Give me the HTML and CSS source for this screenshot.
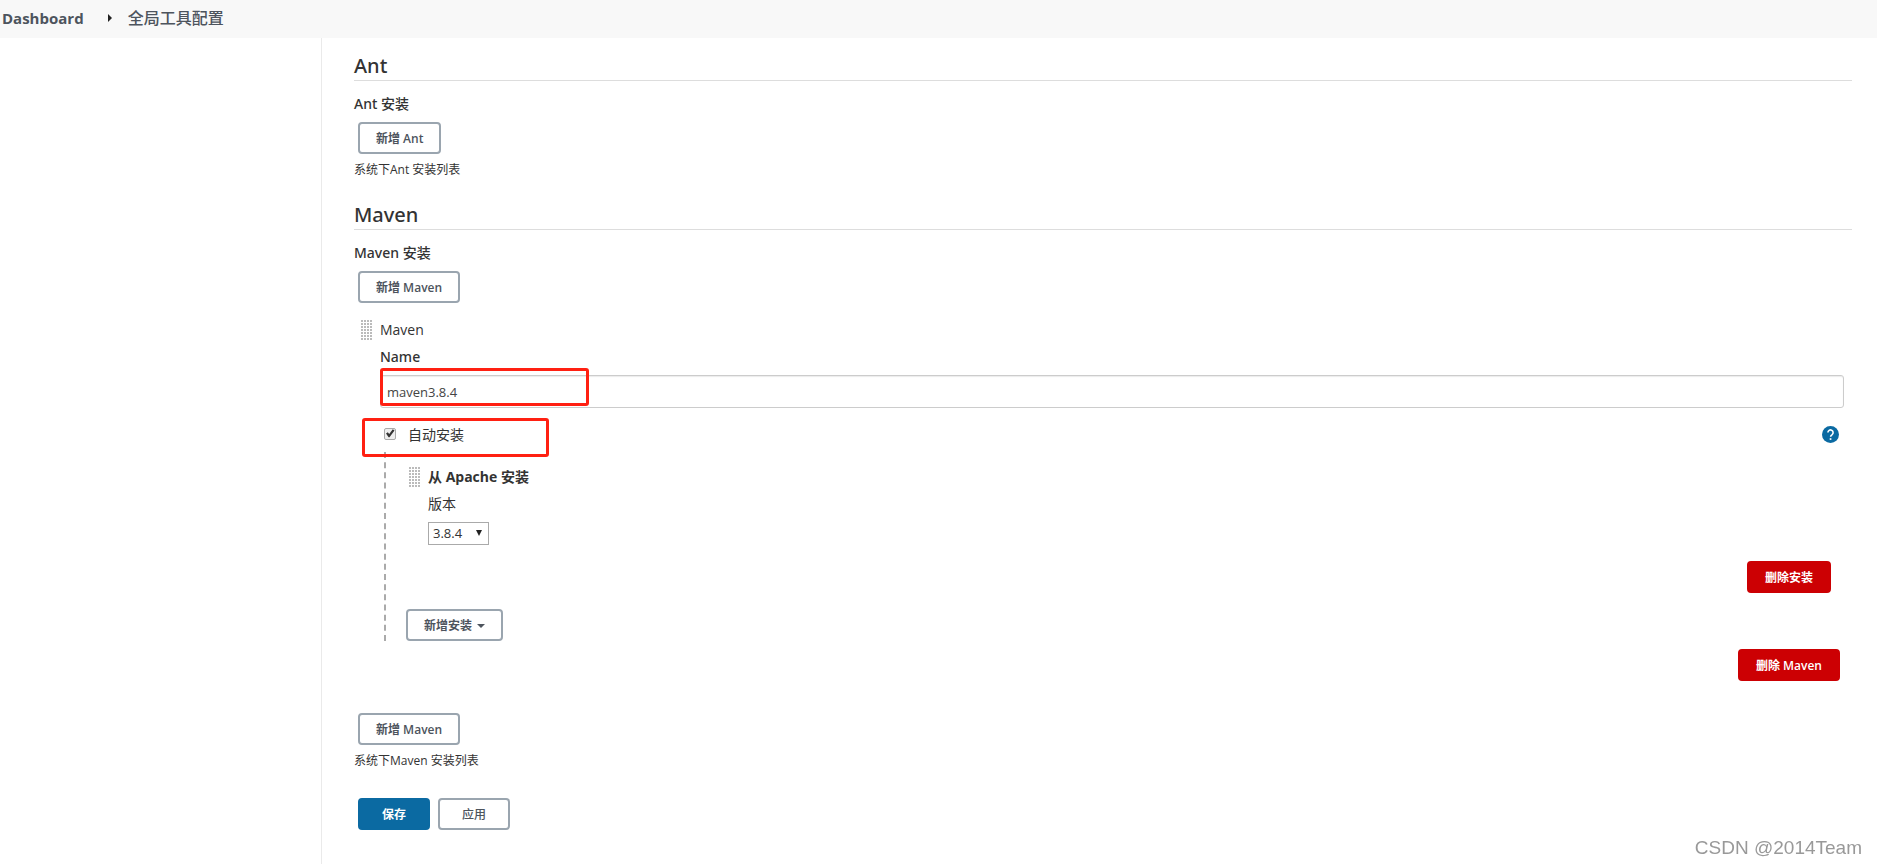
FILE: index.html
```html
<!DOCTYPE html>
<html lang="zh-CN">
<head>
  <meta charset="utf-8">
  <title>全局工具配置</title>
  <link rel="stylesheet" href="styles.css">
</head>
<body>
  <header class="breadcrumbs">
    <a href="#">Dashboard</a>
    <span class="crumb-arrow"></span>
    <a href="#">全局工具配置</a>
  </header>

  <div class="page-body">
    <aside class="side-panel"></aside>

    <main class="main-panel">
      <form>
        <section>
          <h2>Ant</h2>
          <div class="label">Ant 安装</div>
          <button type="button" class="btn">新增 Ant</button>
          <p class="description">系统下Ant 安装列表</p>
        </section>

        <section>
          <h2>Maven</h2>
          <div class="label">Maven 安装</div>
          <button type="button" class="btn">新增 Maven</button>

          <div class="chunk maven">
            <div class="chunk-title"><span class="grip"></span>Maven</div>
            <label class="name-label" for="maven-name">Name</label>
            <div class="name-field">
              <input type="text" id="maven-name" name="name" value="maven3.8.4">
              <span class="highlight highlight-name"></span>
            </div>

            <div class="auto-row">
              <input type="checkbox" id="auto-install" checked>
              <label for="auto-install">自动安装</label>
              <a href="#" class="help" aria-label="帮助">
                <svg width="17" height="17" viewBox="0 0 17 17">
                  <circle cx="8.500" cy="8.500" r="8.500" fill="#0b6aa2"/>
                  <path d="M5.900 6.500a2.600 2.600 0 1 1 4.300 2c-1 .8-1.600 1.100-1.600 2.300" fill="none" stroke="#fff" stroke-width="1.600"/>
                  <rect x="7.700" y="12.200" width="1.700" height="1.700" fill="#fff"/>
                </svg>
              </a>
              <span class="highlight highlight-auto"></span>
            </div>

            <div class="installers">
              <div class="chunk">
                <div class="chunk-title bold"><span class="grip"></span>从 Apache 安装</div>
                <label class="version-label" for="version">版本</label>
                <div class="select">
                  <select id="version" name="version">
                    <option>3.8.4</option>
                  </select>
                </div>
                <div class="actions">
                  <button type="button" class="btn danger">删除安装</button>
                </div>
              </div>
              <button type="button" class="btn">新增安装<span class="caret"></span></button>
            </div>

            <div class="actions">
              <button type="button" class="btn danger">删除 Maven</button>
            </div>
          </div>

          <button type="button" class="btn">新增 Maven</button>
          <p class="description">系统下Maven 安装列表</p>
        </section>

        <div class="bottom-bar">
          <button type="submit" class="btn primary">保存</button>
          <button type="button" class="btn apply">应用</button>
        </div>
      </form>
    </main>
  </div>

  <div class="watermark">CSDN @2014Team</div>
</body>
</html>
```

FILE: styles.css
```css
* {
  box-sizing: border-box;
}

body {
  margin: 0;
  font-family: "Open Sans", "Noto Sans CJK SC", sans-serif;
  font-size: 14px;
  line-height: 24px;
  color: #333;
  background-color: #fff;
}

.breadcrumbs {
  display: flex;
  align-items: center;
  height: 38px;
  padding: 0 0 2px 2px;
  background-color: #f8f8f8;
}

.breadcrumbs a {
  color: #4d545d;
  font-size: 15px;
  font-weight: 700;
  text-decoration: none;
}

.breadcrumbs a:last-child {
  font-size: 16px;
  font-weight: 500;
}

.crumb-arrow {
  margin: 0 16px 0 24px;
  border: 4px solid transparent;
  border-left-color: #222;
  border-right: 0;
}

.page-body {
  display: flex;
  min-height: calc(100vh - 38px);
}

.side-panel {
  width: 322px;
  flex: none;
  border-right: 1px solid #eaeaea;
}

.main-panel {
  flex: 1;
  padding: 13px 25px 34px 32px;
}

section {
  margin-bottom: 20px;
}

h2,
.label,
.name-label {
  font-family: "Noto Sans", "Noto Sans CJK SC", sans-serif;
  font-weight: 500;
}

h2 {
  margin: 0 0 11px;
  font-size: 20px;
  line-height: 29px;
  border-bottom: 1px solid #ddd;
}

.label {
  margin-bottom: 6px;
}

.description {
  margin: 6px 0 0;
  font-size: 12px;
  line-height: 20px;
}

.btn {
  display: block;
  height: 32px;
  margin: 0 4px;
  padding: 1px 16px 0;
  border: 2px solid #9aa5af;
  border-radius: 4px;
  background-color: #fff;
  color: #4d545d;
  font-family: inherit;
  font-size: 12px;
  line-height: 27px;
  font-weight: 600;
  cursor: pointer;
}

.danger {
  border-color: #cc0003;
  background-color: #cc0003;
  color: #fff;
}

.primary {
  border-color: #0b6aa2;
  background-color: #0b6aa2;
  color: #fff;
}

/* repeatable blocks */
.chunk-title {
  display: flex;
  align-items: center;
  margin-bottom: 3px;
}

.bold {
  font-weight: 700;
}

.grip {
  width: 12px;
  height: 21px;
  margin: 0 7px 0 -19px;
  background-image: radial-gradient(circle at 1px 1px, #bbb 1px, transparent 1px);
  background-size: 3px 3px;
}

.maven {
  margin: 15px 0 32px;
  padding: 0 8px 0 26px;
}

.name-label {
  display: block;
  margin-bottom: 6px;
}

.name-field {
  position: relative;
}

.name-field input {
  display: block;
  width: 100%;
  height: 33px;
  padding: 0 6px;
  border: 1px solid #ccc;
  border-radius: 3px;
  box-shadow: inset 0 1px 1px rgba(0, 0, 0, 0.08);
  color: #444;
  font-family: inherit;
  font-size: 13px;
}

.auto-row {
  position: relative;
  display: flex;
  align-items: center;
  margin: 15px 0 5px;
  padding: 0 5px 0 4px;
}

.auto-row input {
  appearance: none;
  width: 12px;
  height: 12px;
  margin: 0 12px 3px 0;
  border: 1px solid #aaa;
  border-radius: 2px;
  background-color: #eee;
}

.auto-row input:checked::before {
  content: "";
  display: block;
  width: 10px;
  height: 10px;
  background-color: #333;
  clip-path: polygon(10% 50%, 28% 38%, 42% 55%, 78% 8%, 95% 20%, 45% 88%, 36% 88%);
}

.help {
  display: flex;
  margin: 0 0 2px auto;
}

/* red marker boxes over the form */
.highlight {
  position: absolute;
  border: 3px solid #ff2012;
  border-radius: 3px;
  pointer-events: none;
}

.highlight-name {
  top: -7px;
  left: 0;
  width: 209px;
  height: 38px;
}

.highlight-auto {
  top: -5px;
  left: -18px;
  width: 187px;
  height: 39px;
}

.installers {
  margin-left: 4px;
  padding: 13px 9px 0 18px;
  border-left: 2px dashed #aaa;
}

.installers .chunk {
  margin-bottom: 16px;
  padding-left: 24px;
}

.installers .btn {
  margin-left: 2px;
}

.version-label {
  display: block;
  margin-bottom: 6px;
}

.select {
  position: relative;
  width: 61px;
  margin-bottom: 16px;
}

.select select {
  appearance: none;
  display: block;
  width: 100%;
  height: 23px;
  padding: 0 4px;
  border: 1px solid #aaa;
  border-radius: 0;
  background-color: #fff;
  color: #333;
  font-family: inherit;
  font-size: 13px;
  line-height: 21px;
}

.select::after {
  content: "";
  position: absolute;
  top: 8px;
  right: 7px;
  border: 3px solid transparent;
  border-top: 6px solid #222;
  border-bottom: 0;
}

.caret {
  display: inline-block;
  margin-left: 5px;
  vertical-align: 2px;
  border: 4px solid transparent;
  border-top-color: #4d545d;
  border-bottom: 0;
}

.actions {
  display: flex;
  justify-content: flex-end;
}

.installers .actions .btn {
  margin: 0 4px 0 0;
}

.installers + .actions {
  margin-top: 8px;
}

.bottom-bar {
  display: flex;
  margin-top: 27px;
}

.bottom-bar .btn {
  width: 72px;
}

.apply {
  font-weight: 500;
}

.watermark {
  position: fixed;
  right: 15px;
  bottom: 4px;
  color: #999;
  font-family: "Liberation Sans", sans-serif;
  font-size: 19px;
}
```
